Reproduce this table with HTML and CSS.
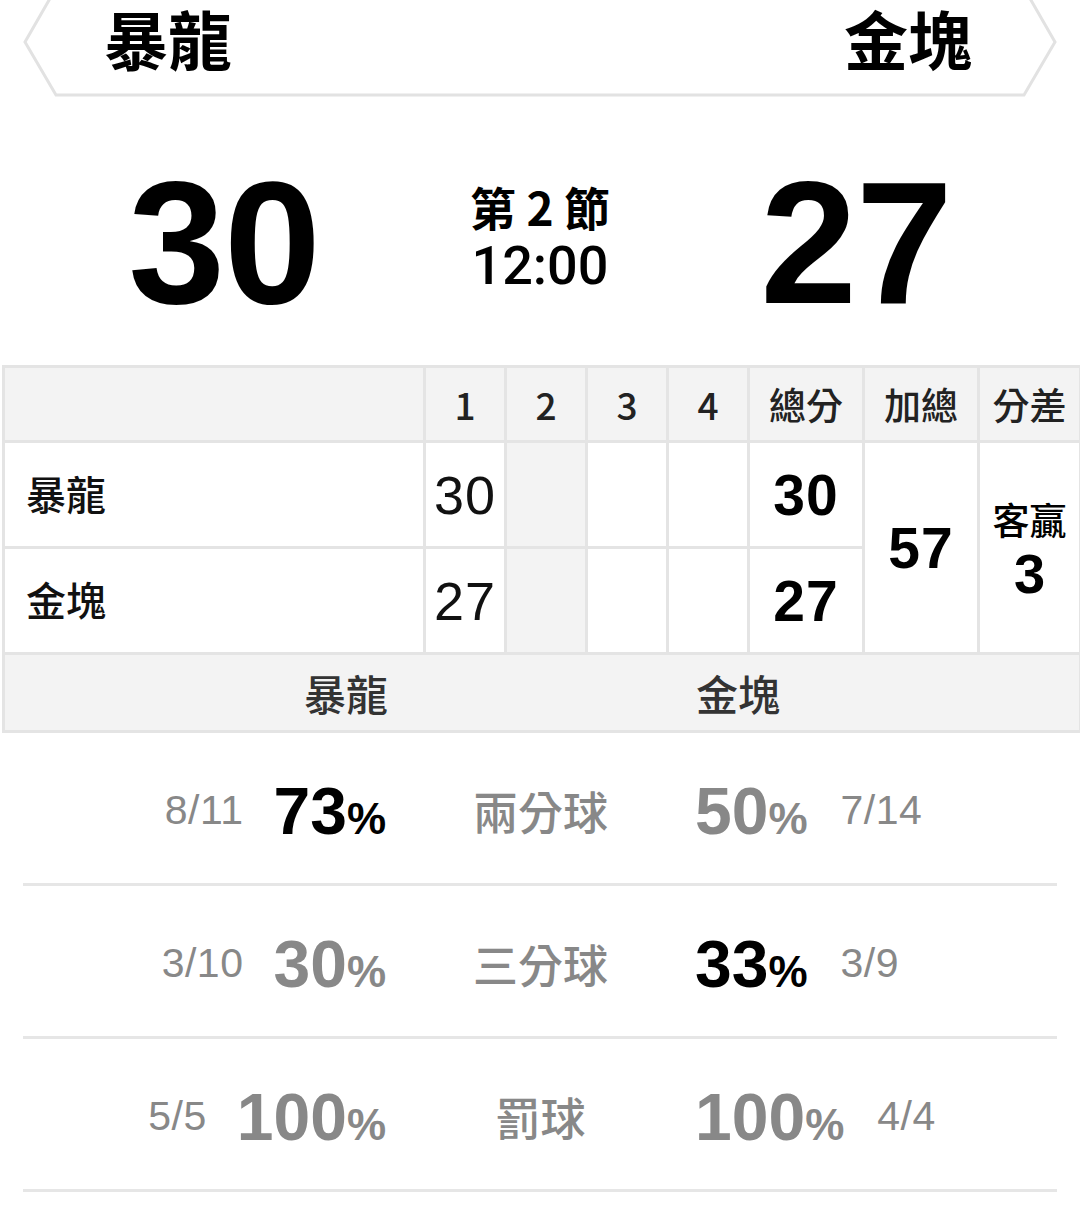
FILE: index.html
```html
<!DOCTYPE html>
<html lang="zh-Hant">
<head>
<meta charset="utf-8">
<title>比賽資訊</title>
<link rel="stylesheet" href="styles.css">
</head>
<body>
<div class="page">
  <header class="matchup">
    <svg class="matchup-frame" width="1080" height="100" viewBox="0 0 1080 100" aria-hidden="true">
      <polygon points="56,-12 25,42 56,95 1024,95 1055,42 1024,-12" fill="#fff" stroke="#e2e2e2" stroke-width="3" stroke-linejoin="miter"/>
    </svg>
    <span class="matchup-team">暴龍</span>
    <span class="matchup-team">金塊</span>
  </header>

  <section class="scoreboard">
    <div class="big-score">30</div>
    <div class="period">
      <div class="period-label">第 2 節</div>
      <div class="clock">12:00</div>
    </div>
    <div class="big-score">27</div>
  </section>

  <table class="box">
    <colgroup>
      <col class="c-name"><col class="c-q"><col class="c-q"><col class="c-q"><col class="c-q">
      <col class="c-tot"><col class="c-tot"><col class="c-diff">
    </colgroup>
    <thead>
      <tr class="box-head">
        <th></th><th>1</th><th>2</th><th>3</th><th>4</th><th>總分</th><th>加總</th><th>分差</th>
      </tr>
    </thead>
    <tbody>
      <tr class="box-row">
        <td class="name">暴龍</td>
        <td class="q">30</td>
        <td class="q shade"></td>
        <td class="q"></td>
        <td class="q"></td>
        <td class="tot">30</td>
        <td class="tot" rowspan="2">57</td>
        <td class="diff" rowspan="2"><div class="diff-label">客贏</div><div class="diff-num">3</div></td>
      </tr>
      <tr class="box-row">
        <td class="name">金塊</td>
        <td class="q">27</td>
        <td class="q shade"></td>
        <td class="q"></td>
        <td class="q"></td>
        <td class="tot">27</td>
      </tr>
      <tr class="team-row">
        <td colspan="8"><div class="team-pair"><span>暴龍</span><span>金塊</span></div></td>
      </tr>
    </tbody>
  </table>

  <section class="stats">
    <div class="stat-row">
      <div class="side left"><span class="frac">8/11</span><span class="pct lead">73<span class="sym">%</span></span></div>
      <div class="label">兩分球</div>
      <div class="side right"><span class="pct">50<span class="sym">%</span></span><span class="frac">7/14</span></div>
    </div>
    <div class="stat-row">
      <div class="side left"><span class="frac">3/10</span><span class="pct">30<span class="sym">%</span></span></div>
      <div class="label">三分球</div>
      <div class="side right"><span class="pct lead">33<span class="sym">%</span></span><span class="frac">3/9</span></div>
    </div>
    <div class="stat-row">
      <div class="side left"><span class="frac">5/5</span><span class="pct">100<span class="sym">%</span></span></div>
      <div class="label">罰球</div>
      <div class="side right"><span class="pct">100<span class="sym">%</span></span><span class="frac">4/4</span></div>
    </div>
  </section>
</div>
</body>
</html>
```

FILE: styles.css
```css
* { box-sizing: border-box; }

html, body {
  margin: 0;
  padding: 0;
  background: #fff;
}

body {
  font-family: "Liberation Sans", "Noto Sans CJK TC", sans-serif;
  color: #000;
}

.page {
  width: 1080px;
}

/* top matchup banner */
.matchup {
  position: relative;
  height: 97px;
  display: flex;
  justify-content: space-between;
  align-items: center;
  padding: 0 108px 22px 104px;
}

.matchup-frame {
  position: absolute;
  left: 0;
  top: 0;
  z-index: 0;
}

.matchup-team {
  position: relative;
  z-index: 1;
  font-family: "Noto Sans CJK TC", sans-serif;
  font-weight: 700;
  font-size: 64px;
  line-height: 1.1;
  color: #000;
}

/* score */
.scoreboard {
  height: 268px;
  display: grid;
  grid-template-columns: 448px 184px 448px;
  align-items: center;
  padding-top: 24px;
}

.big-score {
  font-family: "Liberation Sans", sans-serif;
  font-weight: 700;
  font-size: 174px;
  line-height: 1;
  text-align: center;
  letter-spacing: -1px;
}

.period {
  text-align: center;
  margin-top: -10px;
}

.period-label {
  font-family: "Noto Sans CJK TC", sans-serif;
  font-weight: 700;
  font-size: 46px;
  line-height: 56px;
  white-space: nowrap;
}

.clock {
  font-family: Roboto, "Liberation Sans", sans-serif;
  font-weight: 500;
  font-size: 54px;
  line-height: 64px;
}

/* box score table */
.box {
  width: 1077px;
  margin: 0 0 0 2px;
  border-collapse: collapse;
  table-layout: fixed;
}

.c-name { width: 421px; }
.c-q { width: 81px; }
.c-tot { width: 115px; }
.c-diff { width: 102px; }

.box th,
.box td {
  border: 3px solid #e4e4e4;
  padding: 0;
}

.box-head th {
  height: 75px;
  background: #f3f3f3;
  font-family: "Noto Sans CJK TC", sans-serif;
  font-weight: 500;
  font-size: 37px;
  color: #222;
  text-align: center;
}

.box-row td {
  height: 106px;
  background: #fff;
  text-align: center;
}

.box-row .name {
  text-align: left;
  padding-left: 21px;
  padding-bottom: 4px;
  font-family: "Noto Sans CJK TC", sans-serif;
  font-weight: 500;
  font-size: 40px;
  color: #111;
}

.box-row .q {
  font-family: "Liberation Sans", sans-serif;
  font-size: 54px;
  color: #111;
  letter-spacing: 1px;
}

.box-row .shade {
  background: #f3f3f3;
}

.box-row .tot {
  font-family: "Liberation Sans", sans-serif;
  font-weight: 700;
  font-size: 57px;
  letter-spacing: 1px;
}

.diff-label {
  font-family: "Noto Sans CJK TC", sans-serif;
  font-weight: 500;
  font-size: 37px;
  line-height: 52px;
}

.diff-num {
  font-family: "Liberation Sans", sans-serif;
  font-weight: 700;
  font-size: 56px;
  line-height: 58px;
}

.team-row td {
  height: 78px;
  background: #f3f3f3;
}

.team-pair {
  display: flex;
  justify-content: center;
  gap: 192px;
}

.team-pair span {
  width: 200px;
  text-align: center;
  font-family: "Noto Sans CJK TC", sans-serif;
  font-weight: 500;
  font-size: 42px;
  color: #333;
}

/* shooting stats */
.stats {
  padding: 0 23px;
}

.stat-row {
  height: 153px;
  padding-top: 5px;
  display: grid;
  grid-template-columns: 363px 309px 1fr;
  align-items: center;
  border-bottom: 3px solid #e6e6e6;
}

.side {
  display: flex;
  align-items: center;
}

.side.left {
  justify-content: flex-end;
  gap: 30px;
}

.side.right {
  justify-content: flex-start;
  gap: 33px;
}

.frac {
  font-family: "Liberation Sans", sans-serif;
  font-size: 41px;
  color: #888;
  letter-spacing: 0.5px;
}

.pct {
  font-family: "Liberation Sans", sans-serif;
  font-weight: 700;
  font-size: 66px;
  line-height: 1;
  color: #888;
}

.pct.lead {
  color: #000;
}

.pct .sym {
  font-size: 44px;
  font-weight: 700;
}

.label {
  text-align: center;
  font-family: "Noto Sans CJK TC", sans-serif;
  font-weight: 500;
  font-size: 45px;
  color: #888;
}
```
